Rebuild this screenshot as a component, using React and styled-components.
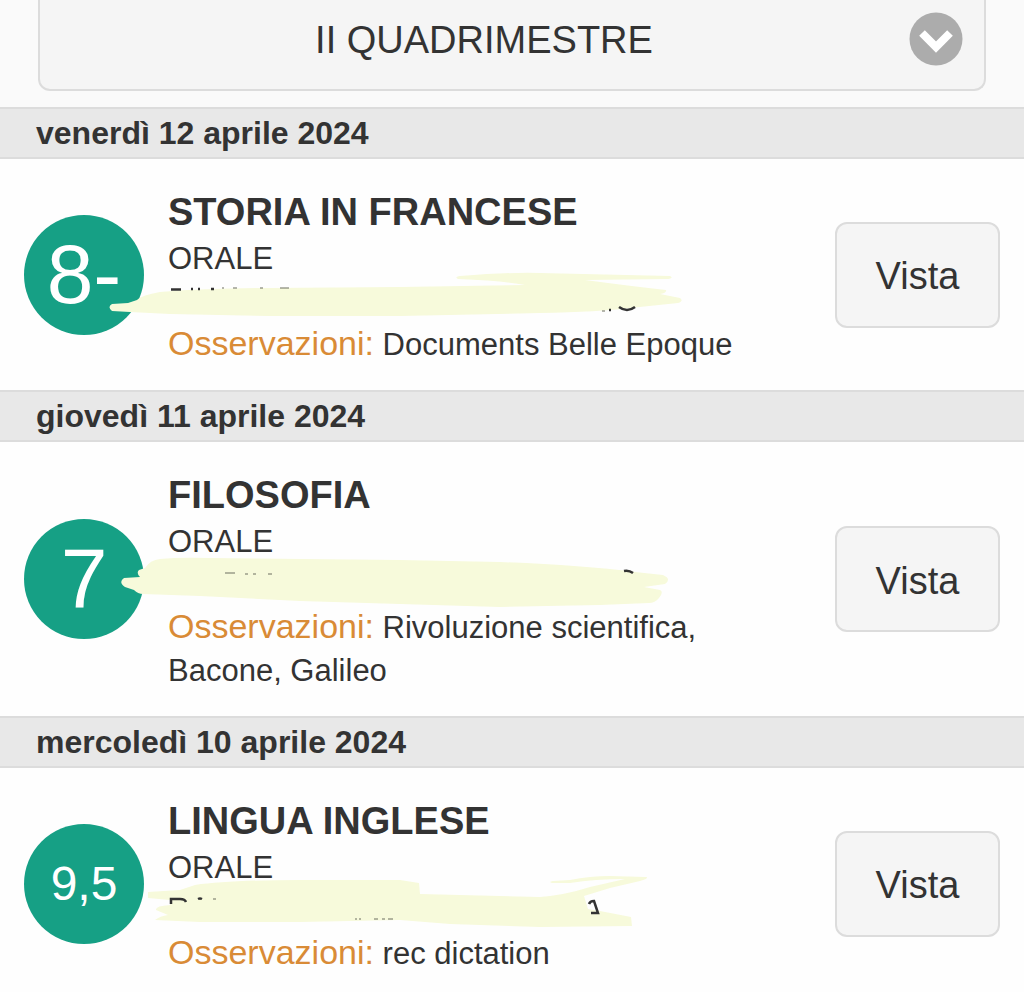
import React from 'react';
import styled, { createGlobalStyle } from 'styled-components';

const GlobalStyle = createGlobalStyle`
  * {
    box-sizing: border-box;
  }
  body {
    margin: 0;
    background: #fefefe;
    color: #333;
    font-family: 'Liberation Sans', Arial, sans-serif;
  }
`;

const Page = styled.main`
  width: 100%;
`;

const PeriodBar = styled.header`
  padding: 0 38px 16px;
  background: #fafafa;
`;

const PeriodField = styled.div`
  position: relative;
`;

const PeriodSelect = styled.select`
  display: block;
  width: 100%;
  height: 91px;
  padding: 0 80px 10px 24px;
  appearance: none;
  background: #f5f5f5;
  border: 2px solid #dcdcdc;
  border-top: none;
  border-radius: 0 0 12px 12px;
  color: #333;
  font-family: inherit;
  font-size: 38px;
  text-align: center;
  text-align-last: center;
`;

const PeriodIcon = styled.svg`
  position: absolute;
  top: 12px;
  right: 23px;
  width: 54px;
  height: 54px;
  pointer-events: none;
`;

const DayHeading = styled.h2`
  margin: 0;
  padding: 0 36px;
  background: #e8e8e8;
  border-top: 2px solid #dcdcdc;
  border-bottom: 2px solid #dcdcdc;
  font-size: 32px;
  line-height: 48px;
`;

const Row = styled.article`
  display: flex;
  align-items: center;
  gap: 24px;
  padding: 0 24px;
`;

const Grade = styled.div`
  display: flex;
  flex: none;
  align-items: center;
  justify-content: center;
  width: 120px;
  height: 120px;
  padding-bottom: ${(props) => (props.$small ? '0' : '2px')};
  border-radius: 50%;
  background: #16a085;
  color: white;
  font-size: ${(props) => (props.$small ? '48px' : '84px')};
  line-height: 1;
`;

const Details = styled.div`
  flex: 1;
  min-width: 0;
  padding: 28px 0 24px;
  font-size: 31px;
  line-height: 43px;
`;

const Subject = styled.h3`
  margin: 0;
  font-size: 38px;
  line-height: 50px;
`;

const Line = styled.p`
  margin: 0;
`;

const Teacher = styled.div`
  position: relative;
  height: 43px;
`;

const Marker = styled.svg`
  position: absolute;
  top: -20px;
  left: -68px;
  width: 600px;
  height: 80px;
  pointer-events: none;
`;

const NotesLabel = styled.span`
  color: #d98b36;
  font-size: 34px;
  line-height: 1;
`;

const SeenButton = styled.button`
  flex: none;
  width: 165px;
  height: 106px;
  padding: 4px 0 0;
  background: #f5f5f5;
  border: 2px solid #dcdcdc;
  border-radius: 12px;
  color: #333;
  font-family: inherit;
  font-size: 38px;
`;

const marks = [
  {
    id: 'storia',
    day: 'venerdì 12 aprile 2024',
    grade: '8-',
    subject: 'STORIA IN FRANCESE',
    kind: 'ORALE',
    notes: 'Documents Belle Epoque',
    marker:
      'M12 44 L28 43 L37 40 Q42 35 60 32 Q110 28 170 28 L300 27 L425 25 Q405 21 358 19 Q354 17 360 16 Q410 12 440 13 L570 16 Q574 18 568 19 L485 20 Q530 26 566 30 Q567 33 560 34 L580 38 Q584 41 578 43 L530 48 Q500 52 440 53 L300 56 L170 56 L70 54 L30 52 L12 51 Q7 47 12 44Z',
    ink: 'M71 29.5h10 M91 29h2 M98 29h2 M111 29h3 M509 50h2 M519 47q8 6 16 0',
    dots: 'M122 28h2 M133 28h4 M160 28h3 M180 28h9 M502 51h3',
  },
  {
    id: 'filosofia',
    day: 'giovedì 11 aprile 2024',
    grade: '7',
    subject: 'FILOSOFIA',
    kind: 'ORALE',
    notes: 'Rivoluzione scientifica, Bacone, Galileo',
    marker:
      'M24 35 L40 34 Q36 30 39 27 L45 25 Q50 17 60 16 Q80 14 110 15 L300 17 L400 19 Q480 22 535 29 L563 32 Q572 36 565 41 L544 44 L560 47 Q564 49 559 55 Q555 60 549 60 L500 62 L400 64 L300 61 L200 58 L100 53 L43 51 Q38 51 34 47 L25 44 Q18 39 24 35Z',
    ink: 'M524 28q5-1 9 2',
    dots: 'M125 30h10 M145 31h3 M153 31h3 M168 31h4',
  },
  {
    id: 'inglese',
    day: 'mercoledì 10 aprile 2024',
    grade: '9,5',
    small: true,
    subject: 'LINGUA INGLESE',
    kind: 'ORALE',
    notes: 'rec dictation',
    marker:
      'M48 23 L80 21 L95 16 Q130 11 200 11 L300 11 L319 14 L320 25 L440 28 Q465 26 490 18 L525 10 Q495 10 470 14 L452 14 Q448 13 453 12 L470 11 Q490 7 510 7 L546 8 Q550 9 540 12 L510 19 L484 27 L488 40 L500 42 L531 48 L532 57 L440 58 L350 55 L300 51 L200 53 L100 53 L55 51 Q60 47 68 46 L56 41 Q55 37 70 36 L70 31 L48 29Z',
    ink: 'M71 35v-5h9q5 0 6 3 M98 30q2-1 4 0 M489 35q1-3 5-3l4 12h-7',
    dots: 'M255 50h2 M260 49v2 M274 50h4 M282 50h3 M288 50h5 M113 30h3',
  },
];

const Mark = ({ mark }) => (
  <section>
    <DayHeading>{mark.day}</DayHeading>
    <Row>
      <Grade $small={mark.small}>{mark.grade}</Grade>
      <Details>
        <Subject>{mark.subject}</Subject>
        <Line>{mark.kind}</Line>
        <Teacher>
          <Marker viewBox="0 0 600 80" aria-hidden="true">
            <path d={mark.marker} fill="#f7fadb" />
            <path d={mark.ink} fill="none" stroke="#333" strokeWidth="2.5" />
            <path d={mark.dots} fill="none" stroke="#6d6e60" strokeWidth="1" />
          </Marker>
        </Teacher>
        <Line>
          <NotesLabel>Osservazioni:</NotesLabel> {mark.notes}
        </Line>
      </Details>
      <SeenButton type="button">Vista</SeenButton>
    </Row>
  </section>
);

const App = () => {
  return (
    <Page>
      <GlobalStyle />
      <PeriodBar>
        <PeriodField>
          <PeriodSelect aria-label="Periodo" defaultValue="2">
            <option value="2">II QUADRIMESTRE</option>
          </PeriodSelect>
          <PeriodIcon viewBox="0 0 54 54" aria-hidden="true">
            <circle cx="27" cy="27" r="26.5" fill="#acacac" />
            <path
              d="M13 21 L27 35 L41 21"
              fill="none"
              stroke="white"
              strokeWidth="8"
            />
          </PeriodIcon>
        </PeriodField>
      </PeriodBar>
      {marks.map((mark) => (
        <Mark key={mark.id} mark={mark} />
      ))}
    </Page>
  );
};

export default App;
